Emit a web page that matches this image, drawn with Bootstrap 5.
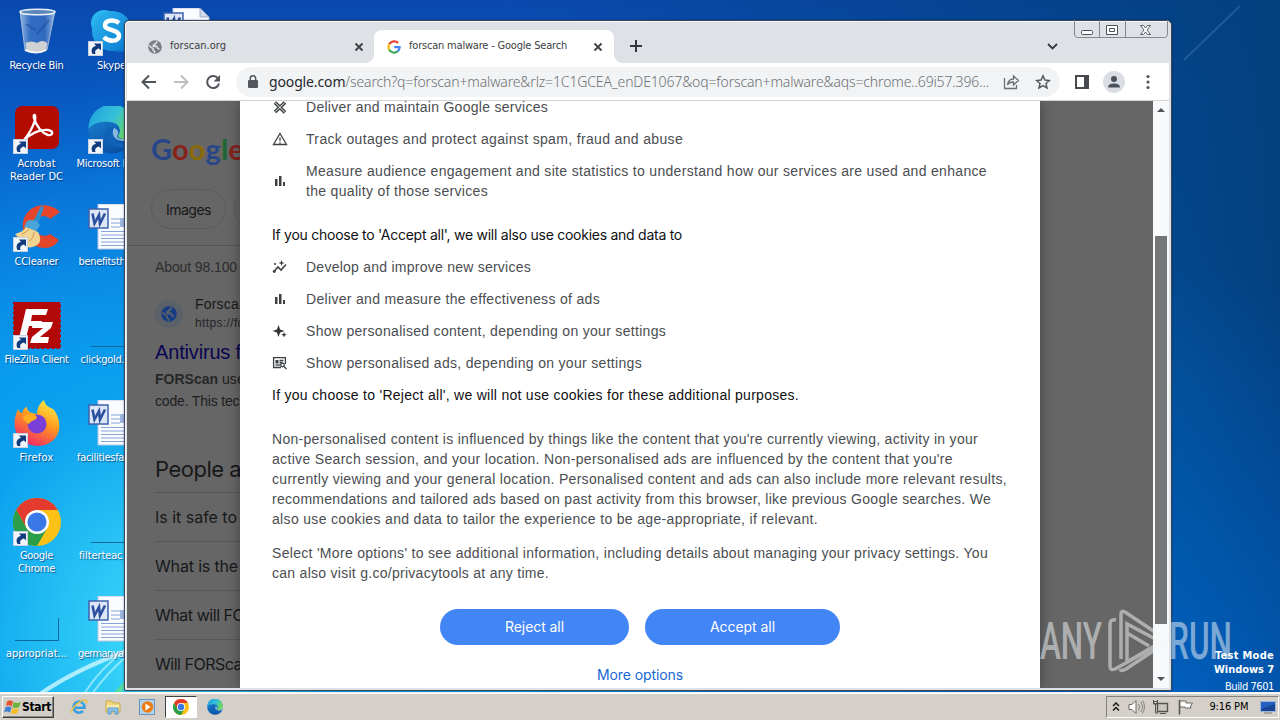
<!DOCTYPE html>
<html lang="en">

<head>
    <meta charset="UTF-8">
    <meta name="viewport" content="width=device-width, initial-scale=1">
    <title>forscan malware - Google Search</title>
    <link href="https://cdn.jsdelivr.net/npm/bootstrap@5.3.0/dist/css/bootstrap.min.css" rel="stylesheet">
    <style>
        body { width: 1280px; height: 720px; overflow: hidden; font-family: "Liberation Sans", Arial, sans-serif; }
        svg { display: block; flex: none; }
        [data-w] { white-space: nowrap; }
        .ui-font { font-family: "DejaVu Sans Condensed", "DejaVu Sans", sans-serif; font-stretch: condensed; }
        .g-font { font-family: Inter, sans-serif; }

        .desktop {
            width: 1280px; height: 692px;
            background:
                radial-gradient(ellipse 420px 560px at 150px 640px, rgba(64, 222, 250, .95), rgba(20, 170, 240, .6) 45%, rgba(0, 120, 230, 0) 100%),
                radial-gradient(ellipse 500px 500px at 1130px 760px, rgba(0, 105, 215, .75), rgba(0, 90, 190, 0)),
                linear-gradient(90deg, rgba(0, 62, 130, 0) 40%, #03407f 100%),
                linear-gradient(180deg, #0a49ae 0, #0668d2 28%, #0090ec 55%, #009bee 100%);
        }
        .desk-bg { left: 0; top: 0; }
        .desk-item { width: 76px; color: #fff; font-size: 11px; line-height: 13px; text-shadow: 1px 1px 1px rgba(0, 20, 80, .6); }
        .desk-item svg { margin-bottom: 3px; }
        .desk-item span { margin-right: 1px; }
        .col-a { left: -1px; }
        .col-b { left: 74px; }
        .col-c { left: 149px; }
        .r0 { top: 8px; } .r1 { top: 106px; } .r2 { top: 204px; } .r3 { top: 302px; }
        .r4 { top: 400px; } .r5 { top: 498px; } .r6 { top: 596px; }
        .build-note { right: 6px; bottom: 0; color: #fff; font-size: 11px; line-height: 14px; }
        .build-note b { font-family: "DejaVu Sans Condensed", sans-serif; }

        .browser { left: 124px; top: 20px; width: 1048px; height: 671px; background: #dee1e6; border: 1px solid #3b4658; border-radius: 5px 5px 2px 2px; padding: 0 2px 2px; box-shadow: inset 1px 1px 0 #f6f8fa, 0 0 2px rgba(0, 20, 60, .5); }
        .tab-strip { height: 42px; padding-top: 9px; font-size: 11px; color: #3c4043; }
        .tab-idle { width: 247px; height: 33px; padding: 0 10px 0 21px; }
        .tab-on { width: 240px; height: 33px; padding: 0 11px 0 13px; background: #fff; border-radius: 8px 8px 0 0; position: relative; }
        .tab-on::before, .tab-on::after { content: ""; position: absolute; bottom: 0; width: 8px; height: 8px; }
        .tab-on::before { left: -8px; background: radial-gradient(circle at 0 0, transparent 7.5px, #fff 8px); }
        .tab-on::after { right: -8px; background: radial-gradient(circle at 100% 0, transparent 7.5px, #fff 8px); }
        .caption-btns { right: 3px; top: -1px; }
        .tool-row { height: 38px; background: #fff; border-bottom: 1px solid #cfd2d6; padding: 0 13px 0 14px; }
        .omni { width: 824px; height: 30px; border-radius: 15px; background: #f1f3f4; padding: 0 9px 0 11px; margin-left: 15px; font-size: 14px; color: #6d7176; font-family: "Noto Sans", sans-serif; font-weight: 300; }
        .omni b { color: #26282b; font-weight: 400; }
        .url-text { margin-left: 10px; }

        .view { height: 587px; background: #666; position: relative; overflow: hidden; }
        .results { width: 300px; padding-left: 28px; color: #17181a; }
        .logo-text { font-family: Lato, sans-serif; font-weight: 700; font-size: 29px; line-height: 36px; margin: 30px 0 0 -4px; height: 36px; }
        .l-blue { color: #27468a; } .l-red { color: #85231c; } .l-yel { color: #8a6a08; } .l-grn { color: #1e6632; }
        .chips { margin: 22px 0 0 -4px; }
        .chip-pill { height: 40px; width: 75px; border: 1px solid #5a5b5c; border-radius: 20px; font-size: 14px; }
        .rule-top { height: 1px; background: #565656; margin: 16px 0 0 -28px; }
        .stats { font-size: 14px; line-height: 20px; margin-top: 11px; color: #2b2d2f; }
        .site-row { margin-top: 17px; height: 40px; gap: 12px; }
        .site-dot { width: 28px; height: 28px; border-radius: 50%; background: #5a6168; }
        .site-name { font-size: 14px; line-height: 20px; margin-top: -2px; }
        .site-url { font-size: 12px; line-height: 18px; color: #222426; }
        .hit { font-size: 20px; line-height: 26px; color: #0a0552; margin: 5px 0 3px; }
        .snip { font-size: 14px; line-height: 22px; color: #1f2021; }
        .snip b { color: #262728; }
        .paa { font-size: 22px; line-height: 28px; margin: 43px 0 9px; }
        .ask { height: 49px; border-top: 1px solid #565758; font-size: 16px; }

        .consent { left: 113px; top: 0; width: 800px; height: 587px; background: #fff; padding: 0 32px; overflow: hidden; }
        .consent-wrap { left: 113px; top: 0; width: 800px; height: 587px; box-shadow: 0 0 12px rgba(0, 0, 0, .35); }
        .consent-body { margin-top: -4px; font-size: 14px; line-height: 20px; color: #4a4d51; }
        .use-row { margin-bottom: 12px; gap: 18px; }
        .lead-line { color: #0f1012; }
        .lead-first { margin: 24px 0 12px; }
        .para-gap { margin-bottom: 14px; }
        .btn-gap { margin: 26px 0 20px; }
        .pill-btn { background: #4285f4; color: #fff; height: 36px; border-radius: 18px; font-size: 14px; }
        .w-rej { width: 189px; } .w-acc { width: 195px; }
        .more { color: #1967d2; font-size: 14px; }

        .vbar { right: 0; top: 0; width: 16px; height: 587px; background: #f8f9fa; padding: 0 2px; }
        .vbar-thumb { width: 12px; height: 388px; background: #747678; margin: 127px 0 49px; }

        .wm { left: 1036px; top: 606px; }
        .task-row { height: 28px; background: #d4cfc8; border-top: 1px solid #f4f2ee; box-shadow: inset 0 1px 0 #fff; padding: 3px 1px 2px 2px; }
        .start-btn { width: 52px; height: 22px; border: 1px solid; border-color: #fff #404040 #404040 #fff; box-shadow: inset -1px -1px 0 #8a8680; font-size: 12px; font-weight: 700; color: #000; padding-left: 1px; gap: 1px; }
        .pins { margin-left: 9px; gap: 2px; }
        .pin { width: 32px; height: 22px; }
        .pin-on { background: #fff; border: 1px solid; border-color: #404040 #fff #fff #404040; }
        .tray { width: 173px; height: 22px; border: 1px solid; border-color: #85817b #fff #fff #85817b; font-size: 11px; color: #000; padding: 0 2px 0 5px; }
    </style>
</head>

<body>
    <!-- shared icon shapes -->
    <svg width="0" height="0" class="position-absolute">
        <defs>
            <g id="lnk">
                <rect x="0.500" y="33.500" width="14" height="14" fill="#f1f5fa" stroke="#c5d2e2" />
                <path d="M4.500 46C2.500 42 4 38.500 8 38L6 35.500h7v7l-2-2C8 41 6.500 43 7.500 46z" fill="#123b7e" />
            </g>
            <g id="doc">
                <path d="M10 0h27l9 9v36H10z" fill="#fbfcff" stroke="#b9c6e2" />
                <path d="M37 0v9h9z" fill="#d3dcee" stroke="#7e8fb8" stroke-width=".7" />
                <path d="M23 15h9M23 19h9M23 23h9M13 27.500h30M13 31h30M13 34.500h30M13 38h30M13 41.500h30" stroke="#86a3dc" />
                <rect x="32" y="14" width="11" height="9" fill="#9fb4de" />
                <rect x="1" y="5" width="19" height="19" fill="#dde6f6" stroke="#3d62ad" stroke-width="1.500" />
                <path d="M4.500 9.500l2 10 4.500-8.500 1 8.500 5-10" fill="none" stroke="#2b50a0" stroke-width="2.600" />
            </g>
            <g id="chromeball">
                <circle cx="24" cy="24" r="24" fill="#fbc116" />
                <path d="M3.200 12A24 24 0 0 1 44.800 12H24L13.600 30z" fill="#e33b2e" />
                <path d="M3.200 12A24 24 0 0 0 24 48L34.400 30 24 36 13.600 30z" fill="#2b9e49" />
                <circle cx="24" cy="24" r="12" fill="#fff" />
                <circle cx="24" cy="24" r="9.600" fill="#3b78e7" />
            </g>
            <linearGradient id="eg1" x1="0" y1="0" x2="1" y2=".4"><stop offset="0" stop-color="#1f9fe0" /><stop offset=".6" stop-color="#35c1d8" /><stop offset="1" stop-color="#6bd85a" /></linearGradient>
            <linearGradient id="eg2" x1="0" y1="0" x2=".6" y2="1"><stop offset="0" stop-color="#1a8ad8" /><stop offset="1" stop-color="#0c4fa3" /></linearGradient>
            <g id="edgeball">
                <circle cx="24" cy="24" r="23.500" fill="url(#eg2)" />
                <path d="M.500 23A23.500 23.500 0 0 1 47.500 21c1 8-5 12-11 12-5 0-7-2-6-4 4-6-1-13-9-13C11 15 4 18 .500 23z" fill="url(#eg1)" />
                <path d="M21 21c-7 5-5 17 6 20 7 2 13 0 17-5-6 4-20 1-20-9 0-2 0-4 2-5z" fill="#1063b8" />
                <path d="M26 22c-3 4-1 13 9 13 4 0 8-1 10-3l3-6-1-4c-1 6-6 11-12 11-5 0-7-2-5-5 1-2-1-5-4-6z" fill="#d9f3fb" opacity=".6" />
            </g>
            <g id="bars" fill="#3c4043"><rect x="2" y="5" width="2.500" height="7" /><rect x="6" y="2" width="2.500" height="10" /><rect x="10" y="8" width="2" height="4" /></g>
            <path id="xmark" d="M1.500 1.500l7 7M8.500 1.500l-7 7" stroke="#3c4043" stroke-width="1.800" />
            <g id="world">
                <path d="M1.200 5.500l4 3.500v1.300l1.300 1v1.800M8.600 1.200v1.600l-1.600.8v1.400H5.300v1.500H9l.8 2 1.700.6" fill="none" stroke-width="1.500" />
            </g>
            <linearGradient id="ff1" x1=".8" y1="0" x2=".3" y2="1"><stop offset="0" stop-color="#fff24a" /><stop offset=".45" stop-color="#ff9a1e" /><stop offset="1" stop-color="#f0246b" /></linearGradient>
            <linearGradient id="sk1" x1="0" y1="0" x2="1" y2="1"><stop offset="0" stop-color="#2cb8f0" /><stop offset="1" stop-color="#0a78d0" /></linearGradient>
            <linearGradient id="bin1" x1="0" y1="0" x2="1" y2="0"><stop offset="0" stop-color="#b5cfee" stop-opacity=".85" /><stop offset=".3" stop-color="#4f83cf" stop-opacity=".6" /><stop offset=".7" stop-color="#4a7cc8" stop-opacity=".6" /><stop offset="1" stop-color="#c5daf2" stop-opacity=".8" /></linearGradient>
        </defs>
    </svg>

    <div class="desktop position-relative overflow-hidden">
        <svg class="desk-bg position-absolute" width="1280" height="692" fill="none">
            <path d="M40 694Q78 668 130 650" stroke="#d8fbff" stroke-width="4" opacity=".75" />
            <path d="M84 694Q100 668 126 650M92 694Q106 674 128 655" stroke="#c8f8ff" stroke-width="2" opacity=".6" />
            <path d="M116 694l12-13" stroke="#5fe08a" stroke-width="5" opacity=".8" />
            <path d="M1184 60Q1210 35 1240 6" stroke="#5f93cf" stroke-width="2" opacity=".3" />
        </svg>

        <div class="desk-item ui-font col-a r0 position-absolute d-flex flex-column align-items-center">
            <svg width="48" height="48" viewBox="0 0 48 48">
                <path d="M7 3L12 42q12 5 22 0L42 3z" fill="url(#bin1)" stroke="#9fb9d8" />
                <path d="M12.500 35l.8 7q10 4 20 0l1-7q-5-4-10 0-6-3-11.800 0z" fill="#e0dcd4" opacity=".9" />
                <path d="M13 16l10 6M36 12L24 26" stroke="#214f9f" stroke-width="2" opacity=".6" />
                <ellipse cx="24.500" cy="4" rx="17.500" ry="2.800" fill="#5b86b8" stroke="#e4edf5" stroke-width="1.500" />
                <path d="M12 42q12 5 21 0" stroke="#f1f1f1" stroke-width="2" fill="none" />
            </svg>
            <span data-w="54">Recycle Bin</span>
        </div>
        <div class="desk-item ui-font col-a r1 position-absolute d-flex flex-column align-items-center">
            <svg width="48" height="48" viewBox="0 0 48 48">
                <rect x="2" y="0" width="44" height="43" rx="7" fill="#b30b00" />
                <path d="M11 34c5-6 9-13 11-20 1-7-2-6-1-2 2 8 8 15 14 17 5 1 6-4 0-5-8-1-16 3-24 10z" fill="none" stroke="#fff" stroke-width="2.400" />
                <use href="#lnk" />
            </svg>
            <span data-w="38">Acrobat</span><span data-w="53">Reader DC</span>
        </div>
        <div class="desk-item ui-font col-a r2 position-absolute d-flex flex-column align-items-center">
            <svg width="48" height="48" viewBox="0 0 48 48">
                <path d="M47 8C36-3 14-1 10 18c-2 14 8 26 22 26 6 0 11-3 14-8l-9-6c-7 5-16-1-15-9 1-8 9-12 15-6z" fill="#e4452b" />
                <path d="M28 2l3 1-6 17-5-2z" fill="#2f8fca" />
                <path d="M14 17q8-3 13 4l-4 7-12-5z" fill="#49a5d9" />
                <path d="M2 30q8-2 11-7l12 5q5 9-1 13-9 5-12 0z" fill="#f2d491" />
                <path d="M9 30q4-1 7-5M16 37q5-3 5-9" stroke="#c99b4e" fill="none" />
                <use href="#lnk" />
            </svg>
            <span data-w="44">CCleaner</span>
        </div>
        <div class="desk-item ui-font col-a r3 position-absolute d-flex flex-column align-items-center">
            <svg width="48" height="48" viewBox="0 0 48 48">
                <rect x="1" y="0" width="46" height="46" fill="#b30808" />
                <rect x=".5" y="-.5" width="47" height="47" fill="none" stroke="#b30808" stroke-dasharray="3 2" />
                <path d="M13 7h22l-2 6H19l-1 6h11l-1 5H16l-3 12H6z" fill="#fff" />
                <path d="M20 20h20l-2 6-11 9h9l-1 6H17l2-6 11-9H19z" fill="#fff" />
                <use href="#lnk" />
            </svg>
            <span data-w="64">FileZilla Client</span>
        </div>
        <div class="desk-item ui-font col-a r4 position-absolute d-flex flex-column align-items-center">
            <svg width="48" height="48" viewBox="0 0 48 48">
                <path d="M31 0c1 5 4 7 9 9 6 6 9 20 3 28C34 50 13 48 5 36-1 26 2 16 5 9c1 2 2 4 4 4 1-3 3-6 5-6 0 4 3 6 10 7 0-6 3-11 7-14z" fill="url(#ff1)" />
                <circle cx="24" cy="24" r="9.500" fill="#7a3fd6" />
                <path d="M10 17c6-4 12-3 14 0-1 4-6 3-8 7-3-1-5-4-6-7z" fill="#ffad20" />
                <use href="#lnk" />
            </svg>
            <span data-w="34">Firefox</span>
        </div>
        <div class="desk-item ui-font col-a r5 position-absolute d-flex flex-column align-items-center">
            <svg width="48" height="48" viewBox="0 0 48 48"><use href="#chromeball" /><use href="#lnk" /></svg>
            <span data-w="33">Google</span><span data-w="37">Chrome</span>
        </div>
        <div class="desk-item ui-font col-a r6 position-absolute d-flex flex-column align-items-center">
            <svg width="48" height="48" viewBox="0 0 48 48" fill="none"><path d="M2 44.500H45.500V22" stroke="#0a6a9f" /></svg>
            <span data-w="61">appropriat...</span>
        </div>

        <div class="desk-item ui-font col-b r0 position-absolute d-flex flex-column align-items-center">
            <svg width="48" height="48" viewBox="0 0 48 48">
                <circle cx="16" cy="15" r="13" fill="#2ab4ee" /><circle cx="32" cy="30" r="14" fill="#0a78d0" /><circle cx="24" cy="23" r="20" fill="url(#sk1)" />
                <path d="M31 15c-5-4-15-3-14 3 1 5 14 3 14 10 0 6-11 6-15 1" fill="none" stroke="#fff" stroke-width="4.500" />
                <use href="#lnk" />
            </svg>
            <span data-w="29">Skype</span>
        </div>
        <div class="desk-item ui-font col-b r1 position-absolute d-flex flex-column align-items-center">
            <svg width="48" height="48" viewBox="0 0 48 48"><use href="#edgeball" /><use href="#lnk" /></svg>
            <span data-w="70">Microsoft Edge</span>
        </div>
        <div class="desk-item ui-font col-b r2 position-absolute d-flex flex-column align-items-center">
            <svg width="48" height="48" viewBox="0 0 48 48"><use href="#doc" /></svg>
            <span data-w="66">benefitsthe.rtf</span>
        </div>
        <div class="desk-item ui-font col-b r3 position-absolute d-flex flex-column align-items-center">
            <svg width="48" height="48" viewBox="0 0 48 48"><path d="M3 44.500H46" stroke="#0a6a9f" /></svg>
            <span data-w="62">clickgold.png</span>
        </div>
        <div class="desk-item ui-font col-b r4 position-absolute d-flex flex-column align-items-center">
            <svg width="48" height="48" viewBox="0 0 48 48"><use href="#doc" /></svg>
            <span data-w="69">facilitiesfast.rtf</span>
        </div>
        <div class="desk-item ui-font col-b r5 position-absolute d-flex flex-column align-items-center">
            <svg width="48" height="48" viewBox="0 0 48 48"><path d="M3 44.500H46" stroke="#0a6a9f" /></svg>
            <span data-w="65">filterteac.png</span>
        </div>
        <div class="desk-item ui-font col-b r6 position-absolute d-flex flex-column align-items-center">
            <svg width="48" height="48" viewBox="0 0 48 48"><use href="#doc" /></svg>
            <span data-w="67">germanyany.rtf</span>
        </div>
        <div class="desk-item col-c r0 position-absolute d-flex flex-column align-items-center">
            <svg width="48" height="48" viewBox="0 0 48 48"><use href="#doc" /></svg>
        </div>

        <div class="browser position-absolute d-flex flex-column">
            <div class="caption-btns position-absolute">
                <svg width="94" height="19" fill="none">
                    <path d="M.5 0v14q0 3.500 3 3.500h87q3 0 3-3.500V0M25.500 0v17.500M51.500 0v17.500" stroke="#84888f" />
                    <rect x="7.500" y="10.500" width="11" height="4" rx="1" stroke="#4c5058" fill="#fff" />
                    <path d="M32.500 5.500h11v9h-11zM35.500 8.500h5v3h-5z" stroke="#4c5058" fill="#fff" />
                    <path d="M66.500 5.500h3l2 2.500 2-2.500h3l-3.500 4.500 3.500 4.500h-3l-2-2.500-2 2.500h-3l3.500-4.500z" stroke="#5c6068" fill="#fff" />
                </svg>
            </div>
            <div class="tab-strip ui-font d-flex align-items-start">
                <div class="tab-idle d-flex align-items-center">
                    <svg width="14" height="14" viewBox="0 0 14 14"><circle cx="7" cy="7" r="6.800" fill="#7b7e82" /><use href="#world" stroke="#dee1e6" /></svg>
                    <span class="ms-2" data-w="56">forscan.org</span>
                    <svg class="ms-auto" width="10" height="10"><use href="#xmark" /></svg>
                </div>
                <div class="tab-on d-flex align-items-center">
                    <svg width="14" height="14" viewBox="0 0 14 14" fill="none" stroke-width="2.200"><path d="M11.200 3A5.600 5.600 0 0 0 2.200 4.300" stroke="#ea4335" /><path d="M2.200 4.300a5.600 5.600 0 0 0 0 5.400" stroke="#fbbc05" /><path d="M2.200 9.700a5.600 5.600 0 0 0 8.400 1.700" stroke="#34a853" /><path d="M10.600 11.400A5.500 5.500 0 0 0 12.600 7.200H7.200" stroke="#4285f4" /></svg>
                    <span class="ms-2" data-w="158">forscan malware - Google Search</span>
                    <svg class="ms-auto" width="10" height="10"><use href="#xmark" /></svg>
                </div>
                <svg class="ms-3 mt-2" width="12" height="16"><path d="M6 2v12M0 8h12" stroke="#34383c" stroke-width="2" /></svg>
                <svg class="mt-2 ms-auto" width="124" height="16" fill="none"><path d="M3 6l4.500 4.500L12 6" stroke="#34383c" stroke-width="1.800" /></svg>
            </div>
            <div class="tool-row d-flex align-items-center">
                <svg width="16" height="16" fill="none" stroke="#50545a" stroke-width="2"><path d="M15 8H2M8 1.500L1.500 8 8 14.500" /></svg>
                <svg class="ms-3" width="16" height="16" fill="none" stroke="#bcbec1" stroke-width="2"><path d="M1 8h13M8 1.500L14.500 8 8 14.500" /></svg>
                <svg class="ms-3" width="16" height="16"><path d="M13 4.500A6 6 0 1 0 14 9.500" fill="none" stroke="#50545a" stroke-width="2" /><path d="M15 1v6.500H8.500z" fill="#50545a" /></svg>
                <div class="omni d-flex align-items-center">
                    <svg width="12" height="14"><rect x="1" y="5" width="10" height="8" rx="1" fill="#54575c" /><path d="M3.300 6V3.500a2.700 2.700 0 0 1 5.400 0V6" fill="none" stroke="#54575c" stroke-width="1.500" /></svg>
                    <span class="url-text" data-w="720"><b>google.com</b>/search?q=forscan+malware&amp;rlz=1C1GCEA_enDE1067&amp;oq=forscan+malware&amp;aqs=chrome..69i57.396...</span>
                    <svg class="ms-auto" width="16" height="16" fill="none" stroke="#6a6d72" stroke-width="1.300"><path d="M1.500 4v10.500h12V11M4.500 11c.500-4 2.500-6 6-6V2l5 4.500-5 4.500V8c-3 0-5 1-6 3z" /></svg>
                    <svg class="ms-3" width="16" height="16" fill="none" stroke="#55585d" stroke-width="1.500"><path d="M8 1.800l1.900 4.200 4.500.500-3.400 3 1 4.500L8 11.700 4 14l1-4.500-3.400-3L6.100 6z" /></svg>
                </div>
                <svg class="ms-auto" width="14" height="14"><path d="M1 1h12v12H1z" fill="#fff" stroke="#46494d" stroke-width="2" /><rect x="9" width="5" height="14" fill="#46494d" /></svg>
                <svg class="ms-auto" width="22" height="22"><circle cx="11" cy="11" r="11" fill="#dadde3" /><circle cx="11" cy="8" r="3" fill="#4b515b" /><path d="M5 16.500q0-4 6-4t6 4z" fill="#4b515b" /></svg>
                <svg class="ms-auto" width="16" height="16" fill="#50545a"><circle cx="8" cy="2.500" r="1.600" /><circle cx="8" cy="8" r="1.600" /><circle cx="8" cy="13.500" r="1.600" /></svg>
            </div>

            <div class="view">
                <div class="results">
                    <div class="logo-text"><span data-w="93"><span class="l-blue">G</span><span class="l-red">o</span><span class="l-yel">o</span><span class="l-blue">g</span><span class="l-grn">l</span><span class="l-red">e</span></span></div>
                    <div class="chips g-font d-flex gap-2">
                        <div class="chip-pill d-flex align-items-center justify-content-center"><span data-w="45">Images</span></div>
                        <div class="chip-pill"></div>
                    </div>
                    <div class="rule-top"></div>
                    <div class="stats"><span data-w="82">About 98.100</span></div>
                    <div class="site-row d-flex align-items-center">
                        <div class="site-dot d-flex align-items-center justify-content-center">
                            <svg width="16" height="16" viewBox="0 0 14 14"><circle cx="7" cy="7" r="6.800" fill="#143c85" /><use href="#world" stroke="#5a6168" /></svg>
                        </div>
                        <div>
                            <div class="site-name"><span data-w="52">Forscan</span></div>
                            <div class="site-url"><span data-w="54">https://for</span></div>
                        </div>
                    </div>
                    <div class="hit"><span data-w="86">Antivirus f</span></div>
                    <div class="snip"><b data-w="63">FORScan</b> <span data-w="23">use</span></div>
                    <div class="snip"><span data-w="92">code. This tech</span></div>
                    <div class="paa g-font"><span data-w="91">People al</span></div>
                    <div class="ask g-font d-flex align-items-center"><span data-w="82">Is it safe to</span></div>
                    <div class="ask g-font d-flex align-items-center"><span data-w="83">What is the</span></div>
                    <div class="ask g-font d-flex align-items-center"><span data-w="109">What will FORS</span></div>
                    <div class="ask g-font d-flex align-items-center"><span data-w="96">Will FORScan</span></div>
                </div>

                <div class="consent-wrap position-absolute"></div>
                <div class="consent position-absolute">
                    <div class="consent-body">
                        <div class="use-row d-flex align-items-center">
                            <svg width="16" height="14" fill="none" stroke="#3c4043"><path d="M3 2.500l10 10M13 2.500L3 12" stroke-width="3.600" /><path d="M3 2.500l10 10M12.500 3L3.500 11.500" stroke="#fff" stroke-width="1" /></svg>
                            <span data-w="242">Deliver and maintain Google services</span>
                        </div>
                        <div class="use-row d-flex align-items-center">
                            <svg width="16" height="14" fill="none" stroke="#3c4043" stroke-width="1.300"><path d="M8 1.500L14.500 12.500H1.500zM8 5.500v3.500M8 10v1.500" /></svg>
                            <span data-w="377">Track outages and protect against spam, fraud and abuse</span>
                        </div>
                        <div class="use-row d-flex align-items-center">
                            <svg width="16" height="14"><use href="#bars" x="1" /></svg>
                            <div><div><span data-w="681">Measure audience engagement and site statistics to understand how our services are used and enhance</span></div><div><span data-w="182">the quality of those services</span></div></div>
                        </div>
                        <p class="lead-line lead-first g-font"><span data-w="410">If you choose to 'Accept all', we will also use cookies and data to</span></p>
                        <div class="use-row d-flex align-items-center">
                            <svg width="16" height="14"><path d="M2 11.500l4-4.500 3 3L14 4.500" fill="none" stroke="#3c4043" stroke-width="1.600" /><path d="M9.500 0l.8 2.200 2.200.8-2.200.8L9.500 6l-.8-2.200L6.500 3l2.200-.8z" fill="#3c4043" /><circle cx="3" cy="4" r="1.100" fill="#3c4043" /><circle cx="2.200" cy="11.500" r="1.400" fill="#3c4043" /></svg>
                            <span data-w="225">Develop and improve new services</span>
                        </div>
                        <div class="use-row d-flex align-items-center">
                            <svg width="16" height="14"><use href="#bars" x="1" /></svg>
                            <span data-w="294">Deliver and measure the effectiveness of ads</span>
                        </div>
                        <div class="use-row d-flex align-items-center">
                            <svg width="16" height="14" fill="#303336"><path d="M6.500 1l1.600 4.400L12.500 7l-4.400 1.600L6.500 13 4.900 8.600.5 7l4.400-1.600zM12 8l.8 2 2 .8-2 .8-.8 2-.8-2-2-.8 2-.8z" /></svg>
                            <span data-w="360">Show personalised content, depending on your settings</span>
                        </div>
                        <div class="use-row d-flex align-items-center">
                            <svg width="16" height="14" fill="none" stroke="#3c4043" stroke-width="1.300"><path d="M9 11.500H1.600V1.600h11.800V8M7.500 4.500h4M7.500 6.500h3" /><path d="M3.500 4h3v3.500h-3z" fill="#3c4043" stroke="none" /><path d="M3.500 9h5" /><circle cx="10.500" cy="9" r="1.800" /><path d="M12 10.500l2.500 2.500" /></svg>
                            <span data-w="336">Show personalised ads, depending on your settings</span>
                        </div>
                        <p class="lead-line mb-4"><span data-w="527">If you choose to 'Reject all', we will not use cookies for these additional purposes.</span></p>
                        <div class="para-gap">
                            <div><span data-w="706">Non-personalised content is influenced by things like the content that you're currently viewing, activity in your</span></div>
                            <div><span data-w="681">active Search session, and your location. Non-personalised ads are influenced by the content that you're</span></div>
                            <div><span data-w="735">currently viewing and your general location. Personalised content and ads can also include more relevant results,</span></div>
                            <div><span data-w="719">recommendations and tailored ads based on past activity from this browser, like previous Google searches. We</span></div>
                            <div><span data-w="546">also use cookies and data to tailor the experience to be age-appropriate, if relevant.</span></div>
                        </div>
                        <div><span data-w="716">Select 'More options' to see additional information, including details about managing your privacy settings. You</span></div>
                        <div><span data-w="277">can also visit g.co/privacytools at any time.</span></div>
                        <div class="btn-gap g-font d-flex justify-content-center gap-3">
                            <div class="pill-btn w-rej d-flex align-items-center justify-content-center"><span data-w="59">Reject all</span></div>
                            <div class="pill-btn w-acc d-flex align-items-center justify-content-center"><span data-w="65">Accept all</span></div>
                        </div>
                        <div class="more g-font text-center"><span data-w="86">More options</span></div>
                    </div>
                </div>

                <div class="vbar position-absolute">
                    <svg class="position-absolute" width="12" height="20"><path d="M2 11l4-4 4 4z" fill="#505356" /></svg>
                    <div class="pt-2"><div class="vbar-thumb"></div></div>
                    <svg width="12" height="14"><path d="M2 4l4 4 4-4z" fill="#505356" /></svg>
                </div>
            </div>
        </div>

        <!-- recorder watermark -->
        <svg class="wm position-absolute" width="200" height="72" opacity=".5">
            <g fill="#f4f6f8" font-family="Roboto, sans-serif" font-size="52" font-weight="500">
                <text x="4" y="53" textLength="62" lengthAdjust="spacingAndGlyphs">ANY</text>
                <text x="133" y="53" textLength="63" lengthAdjust="spacingAndGlyphs">RUN</text>
            </g>
            <path d="M80 14q-6-1-6 4v42q0 5 5 3l40-22M85 8q0-4 4-2l39 26q4 3 0 6L90 63q-5 3-6 0M85 8v45M91 18v38l34-20zM91 27l22 13" fill="none" stroke="#f4f6f8" stroke-width="3.500" />
        </svg>
        <div class="build-note ui-font position-absolute text-end">
            <div><b data-w="59">Test Mode</b></div>
            <div><b data-w="60">Windows 7</b></div>
            <div class="pt-1 lh-1"><span data-w="49">Build 7601</span></div>
        </div>
    </div>

    <div class="task-row ui-font d-flex">
        <div class="start-btn d-flex align-items-center">
            <svg width="17" height="16"><path d="M3 2.500q3-2 6 0L7.800 7.500Q5 5.500 2 7z" fill="#e5532d" /><path d="M9.700 3q3 2 7 0l-1.500 5q-3.500 2-6.700 0z" fill="#6bb43a" /><path d="M1.500 8.300q3-1.800 6 0L6 13.500q-3-2-6 0z" fill="#3f80d6" /><path d="M8.200 9q3 2 6.800 0l-1.500 5q-3.500 2-6.800 0z" fill="#f4bd2c" /></svg>
            <span data-w="29">Start</span>
        </div>
        <div class="pins d-flex">
            <div class="pin d-flex align-items-center justify-content-center">
                <svg width="18" height="18" fill="none"><path d="M3.500 9.800h11A5.500 5.500 0 1 0 13 13" stroke="#3a9fe0" stroke-width="2.600" /><path d="M2 15C-1 13 9 2 15 2q3 0 1 4" stroke="#e9c04a" stroke-width="1.500" /></svg>
            </div>
            <div class="pin d-flex align-items-center justify-content-center">
                <svg width="16" height="16"><path d="M1 2h6l1 2h7v9H1z" fill="#f0d67a" stroke="#d0ac4c" /><rect x="2" y="6" width="12" height="4" fill="#f9ebb0" /><path d="M3 15V9h10v6h-3v-3H6v3z" fill="#8fc4ea" stroke="#579ac8" /></svg>
            </div>
            <div class="pin d-flex align-items-center justify-content-center">
                <svg width="16" height="16"><rect x=".5" y=".5" width="15" height="15" fill="#b3d2ec" stroke="#6795bd" /><circle cx="8.500" cy="8" r="5.800" fill="#ef7d16" /><path d="M6.500 4.500l5 3.500-5 3.500z" fill="#fff" /></svg>
            </div>
            <div class="pin pin-on d-flex align-items-center justify-content-center">
                <svg width="16" height="16" viewBox="0 0 48 48"><use href="#chromeball" /></svg>
            </div>
            <div class="pin d-flex align-items-center justify-content-center">
                <svg width="16" height="16" viewBox="0 0 48 48"><use href="#edgeball" /></svg>
            </div>
        </div>
        <div class="tray ms-auto d-flex align-items-center justify-content-between">
            <svg width="8" height="12" fill="none" stroke="#111" stroke-width="1.400"><path d="M1 5l3-3 3 3M1 9.500l3-3 3 3" /></svg>
            <svg width="17" height="16" fill="none"><path d="M1 5.500h3l4-4v13l-4-4H1z" fill="#fff" stroke="#6a6864" /><path d="M10.500 5q2 3 0 6M12.500 3q4 5 0 10M14.500 1.500q4 6 0 13" stroke="#85827d" /></svg>
            <svg width="17" height="16" fill="none" stroke="#55534f"><path d="M5.500 4.500h10v8h-10z" fill="#c9c6c0" stroke-width="1.400" /><path d="M1.500 1v4h4V1M3.500 5v9h3M8 14.500h6" /><path d="M2 2.500h3v2H2z" fill="#fff" /></svg>
            <svg width="17" height="16"><path d="M2.500 1v14.500" stroke="#55534f" stroke-width="1.500" /><path d="M3 2h6v2h6.500l-2 3 .500 2H8V8H3z" fill="#fff" stroke="#6a6864" /></svg>
            <span class="ms-2" data-w="39">9:16 PM</span>
            <svg class="ms-1" width="16" height="14"><rect x=".5" y="1.500" width="15" height="10" fill="#2560c0" stroke="#9fb6dc" /><path d="M1 9l14-5v7H1z" fill="#174594" /><path d="M4 13h8" stroke="#777" /></svg>
        </div>
    </div>

    <script>
        // Space each text run so that it fills its data-w width
        document.querySelectorAll('[data-w]').forEach(function(el) {
            const natural = el.getBoundingClientRect().width;
            const gap = (Number(el.dataset.w) - natural) / el.textContent.length;
            el.style.letterSpacing = gap.toFixed(3) + 'px';
        });
    </script>
    <script src="https://cdn.jsdelivr.net/npm/bootstrap@5.3.0/dist/js/bootstrap.bundle.min.js"></script>
</body>

</html>
